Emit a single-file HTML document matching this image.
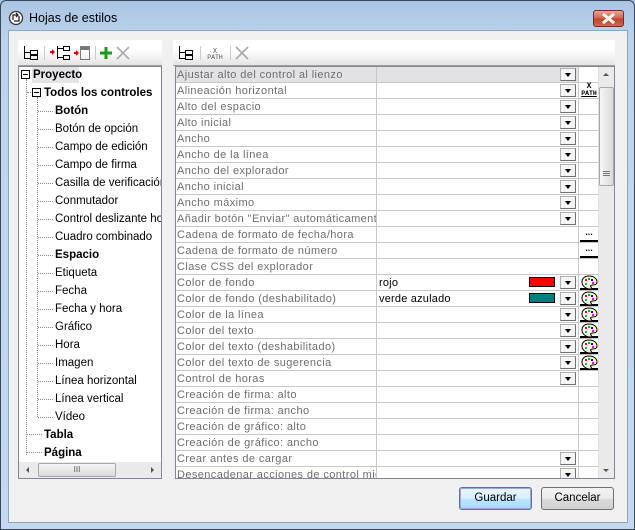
<!DOCTYPE html>
<html><head><meta charset="utf-8"><style>
*{box-sizing:border-box;margin:0;padding:0}
body{width:635px;height:530px;overflow:hidden;font-family:"Liberation Sans","DejaVu Sans",sans-serif;font-size:11px;position:relative;background:#a9c4e2}
.a{position:absolute}
#frame{left:0;top:0;width:635px;height:530px;border:1px solid #3a4a5c;border-radius:6px 6px 0 0;background:linear-gradient(#aac5e4,#bdd4ec 40px,#c4d9ef)}
#client{left:8px;top:30px;width:620px;height:493px;background:#f0f0f0;border:1px solid #8da6c2}
.tb{background:linear-gradient(#fff,#fff 40%,#e4e4e4);height:26px;border-bottom:1px solid #a0a0a0}
#tree{left:18px;top:66px;width:144px;height:413px;border:1px solid #828790;background:#fff;overflow:hidden}
.ti{position:absolute;white-space:nowrap;font-size:11.5px;color:#000;height:16px;line-height:16px}
.b{font-weight:bold}
.box{position:absolute;width:9px;height:9px;border:1px solid #000;background:#fff}
.box:after{content:"";position:absolute;left:1px;top:3px;width:5px;height:1px;background:#000}
.dv{position:absolute;border-left:1px dotted #888;width:0}
.dh{position:absolute;border-top:1px dotted #888;height:0}
#grid{left:175px;top:66px;width:440px;height:413px;border:1px solid #828790;background:#fff;overflow:hidden}
.r{position:absolute;left:0;width:422px;height:16px;border-bottom:1px solid #c8c8c8}
.l{position:absolute;left:0;top:0;width:201px;height:15px;border-right:1px solid #c8c8c8;color:#6d6d6d;font-size:11px;letter-spacing:0.4px;line-height:16px;padding-left:1px;white-space:nowrap;overflow:hidden}
.v{position:absolute;left:201px;top:0;width:202px;height:15px;border-right:1px solid #c8c8c8;font-size:11px;letter-spacing:0.2px;line-height:16px;padding-left:2px;color:#000}
.dd{position:absolute;left:384px;top:1px;width:16px;height:13px;background:#f4f4f4;border:1px solid #b0b0b0;border-right-color:#707070;border-bottom-color:#707070}
.dd:after{content:"";position:absolute;left:4px;top:4px;border-left:3.5px solid transparent;border-right:3.5px solid transparent;border-top:4px solid #000}
.sw{position:absolute;left:354px;top:2px;width:26px;height:10px;border:1px solid #000}
.btn3{position:absolute;left:404px;top:0;width:18px;height:15px;border-bottom:2px solid #000;font-weight:bold;font-size:9px;text-align:center;line-height:10px}
.pal{position:absolute;left:404px;top:0;width:18px;height:15px;border-bottom:2px solid #000}
.button{position:absolute;height:23px;border:1px solid #707070;border-radius:3px;background:linear-gradient(#f2f2f2,#ebebeb 50%,#dddddd 51%,#cfcfcf);text-align:center;line-height:21px;font-size:11.5px}
</style></head><body>
<div id="frame" class="a"></div>
<svg class="a" style="left:8px;top:10px" width="16" height="16" viewBox="0 0 16 16"><circle cx="8" cy="8" r="6.5" fill="#fff" stroke="#333" stroke-width="1.3"/><path d="M5 10V5h5M8 3l2 2-2 2M11 6v5H6" fill="none" stroke="#222" stroke-width="1.3"/></svg>
<div class="a" style="left:29px;top:11px;font-size:12.5px;color:#000">Hojas de estilos</div>
<div class="a" style="left:593px;top:10px;width:31px;height:17px;border:1px solid #7a2a22;border-radius:3px;background:linear-gradient(#e8a496,#d4604c 50%,#c2402a 51%,#d06850)"></div>
<svg class="a" style="left:600px;top:12px" width="17" height="13" viewBox="0 0 17 13"><path d="M3 2l11 9M14 2L3 11" stroke="#fff" stroke-width="3"/><path d="M3 2l11 9M14 2L3 11" stroke="#f4f4f4" stroke-width="2"/></svg>
<div id="client" class="a"></div>

<div class="a tb" style="left:18px;top:40px;width:144px"></div>
<svg class="a" style="left:22px;top:44px" width="140" height="18" viewBox="0 0 140 18">
<g fill="none" stroke="#000"><path d="M2.5 2v12.5h6M2.5 8.5h6"/><rect x="8.5" y="6.5" width="7" height="4"/><rect x="8.5" y="11.5" width="7" height="4"/></g>
<line x1="22.5" y1="2" x2="22.5" y2="16" stroke="#ccc"/>
<g fill="none" stroke="#000"><path d="M35.5 2v13M35.5 4.5h6M35.5 13.5h6"/><rect x="41.5" y="2.5" width="6" height="4"/><rect x="41.5" y="11.5" width="6" height="4"/></g>
<path d="M30 5l3 3-3 3z" fill="#d00"/><rect x="28" y="7" width="3" height="2" fill="#d00"/>
<path d="M54 6l3 3-3 3z" fill="#d00"/><rect x="52" y="8" width="3" height="2" fill="#d00"/>
<g fill="none" stroke="#000" stroke-dasharray="1 1"><rect x="58.5" y="2.5" width="9" height="13"/></g><rect x="59" y="3" width="8" height="3" fill="#777"/>
<line x1="73.5" y1="2" x2="73.5" y2="16" stroke="#ccc"/>
<path d="M84 3v12M78 9h12" stroke="#1a9a1a" stroke-width="3"/>
<path d="M95 3l12 12M107 3L95 15" stroke="#aaa" stroke-width="1.6"/>
</svg>

<div id="tree" class="a">
<div class="dv" style="left:7px;top:12px;height:376px"></div>
<div class="dv" style="left:18px;top:30px;height:320px"></div>
<div class="dh" style="left:8px;top:25px;width:6px"></div>
<div class="dh" style="left:8px;top:367px;width:15px"></div>
<div class="dh" style="left:8px;top:385px;width:15px"></div>
<div id="lines"></div>
<div class="a" style="left:13px;top:0;width:47px;height:16px;background:#e4e4e4"></div>
<div class="box" style="left:2px;top:3px"></div>
<div class="ti b" style="left:14px;top:0">Proyecto</div>
<div class="box" style="left:13px;top:21px"></div>
<div class="ti b" style="left:25px;top:18px">Todos los controles</div>
</div>
<div class="a" style="left:19px;top:462px;width:142px;height:16px;background:#eaeaea"></div>
<div class="a" style="left:38px;top:463px;width:78px;height:14px;border:1px solid #a8a8a8;border-radius:2px;background:linear-gradient(#f6f6f6,#dadada);font-size:8px;text-align:center;line-height:11px;color:#555">III</div>
<div class="a" style="left:26px;top:467px;border-top:3px solid transparent;border-bottom:3px solid transparent;border-right:3px solid #555"></div>
<div class="a" style="left:151px;top:467px;border-top:3px solid transparent;border-bottom:3px solid transparent;border-left:3px solid #555"></div>

<div class="a tb" style="left:173px;top:40px;width:442px"></div>
<svg class="a" style="left:177px;top:44px" width="90" height="18" viewBox="0 0 90 18">
<g fill="none" stroke="#000"><path d="M2.5 2v12.5h6M2.5 8.5h6"/><rect x="8.5" y="6.5" width="7" height="4"/><rect x="8.5" y="11.5" width="7" height="4"/></g>
<line x1="23.5" y1="2" x2="23.5" y2="16" stroke="#ccc"/>
<text x="38" y="9" font-size="7" text-anchor="middle" fill="#555" font-family="Liberation Mono">X</text>
<text x="38" y="15" font-size="6.5" text-anchor="middle" fill="#555" font-family="Liberation Mono">PATH</text>
<line x1="53.5" y1="2" x2="53.5" y2="16" stroke="#ccc"/>
<path d="M59 3l12 12M71 3L59 15" stroke="#aaa" stroke-width="1.6"/>
</svg>

<div id="grid" class="a"><div id="rows"></div>
<div class="a" style="left:422px;top:0;width:17px;height:411px;background:#eaeaea;border-left:1px solid #ddd"></div>
<div class="a" style="left:427px;top:6px;border-left:3px solid transparent;border-right:3px solid transparent;border-bottom:3px solid #555"></div>
<div class="a" style="left:423px;top:20px;width:15px;height:99px;border:1px solid #a8a8a8;border-radius:2px;background:linear-gradient(90deg,#f6f6f6,#dadada)"></div>
<div class="a" style="left:427px;top:104px;width:7px;height:5px;border-top:1px solid #777;border-bottom:1px solid #777"></div>
<div class="a" style="left:427px;top:106px;width:7px;border-top:1px solid #777"></div>
<div class="a" style="left:427px;top:402px;border-left:3px solid transparent;border-right:3px solid transparent;border-top:3px solid #555"></div>
</div>

<div class="button" style="left:459px;top:487px;width:73px;border-color:#3c7fb1;background:linear-gradient(#eaf6fd,#d9f0fc 50%,#bee6fd 51%,#a7d9f5);box-shadow:inset 0 0 0 1px #9ad">Guardar</div>
<div class="button" style="left:541px;top:487px;width:73px">Cancelar</div>

<script>
var items=[["Botón",1],["Botón de opción"],["Campo de edición"],["Campo de firma"],["Casilla de verificación"],["Conmutador"],["Control deslizante horizontal"],["Cuadro combinado"],["Espacio",1],["Etiqueta"],["Fecha"],["Fecha y hora"],["Gráfico"],["Hora"],["Imagen"],["Línea horizontal"],["Línea vertical"],["Vídeo"]];
var h="";items.forEach(function(it,i){var y=36+i*18;h+='<div class="dh" style="left:19px;top:'+(y+8)+'px;width:15px"></div><div class="ti'+(it[1]?' b':'')+'" style="left:36px;top:'+y+'px">'+it[0]+'</div>';});
h+='<div class="ti b" style="left:25px;top:360px">Tabla</div><div class="ti b" style="left:25px;top:378px">Página</div>';
document.getElementById('lines').innerHTML=h;
var pal='<svg width="18" height="15" viewBox="0 0 18 15"><path d="M9 1C4 1 2 4 2 7c0 4 4 7 8 7 2 0 2-1 1-2s0-2 2-2c3 0 4-1 4-3 0-4-4-6-8-6z" fill="#fff4dc" stroke="#000"/><rect x="5" y="4" width="2" height="2" fill="#e00"/><rect x="8" y="3" width="2" height="2" fill="#0a0"/><rect x="11" y="4" width="2" height="2" fill="#00e"/><rect x="12" y="7" width="2" height="2" fill="#e0e"/><rect x="5" y="8" width="2" height="2" fill="#0aa"/></svg>';
var R=[["Ajustar alto del control al lienzo","d",0,0,1],["Alineación horizontal","d","x"],["Alto del espacio","d"],["Alto inicial","d"],["Ancho","d"],["Ancho de la línea","d"],["Ancho del explorador","d"],["Ancho inicial","d"],["Ancho máximo","d"],["Añadir botón \"Enviar\" automáticamente","d"],["Cadena de formato de fecha/hora","","e"],["Cadena de formato de número","","e"],["Clase CSS del explorador",""],["Color de fondo","d","p","rojo|#f00"],["Color de fondo (deshabilitado)","d","p","verde azulado|#008080"],["Color de la línea","d","p"],["Color del texto","d","p"],["Color del texto (deshabilitado)","d","p"],["Color del texto de sugerencia","d","p"],["Control de horas","d"],["Creación de firma: alto",""],["Creación de firma: ancho",""],["Creación de gráfico: alto",""],["Creación de gráfico: ancho",""],["Crear antes de cargar","d"],["Desencadenar acciones de control mientras","d"]];
var g="";R.forEach(function(r,i){var bg=r[4]?'background:#e2e2e2;':'';g+='<div class="r" style="top:'+(i*16)+'px"><div class="l" style="'+bg+'">'+r[0]+'</div><div class="v" style="'+bg+'">';
if(r[3]){var p=r[3].split('|');g+=p[0]+'<div class="sw" style="left:152px;background:'+p[1]+'"></div>';}
g+='</div>';if(r[1])g+='<div class="dd"></div>';
if(r[2]=="x")g+='<div class="btn3" style="border-bottom:0"><div style="font-size:8px;line-height:8px;font-family:Liberation Mono">X</div><div style="font-size:6.5px;line-height:6px;text-decoration:underline;font-family:Liberation Mono">PATH</div></div>';
if(r[2]=="e")g+='<div class="btn3">...</div>';
if(r[2]=="p")g+='<div class="pal">'+pal+'</div>';
g+='</div>';});
document.getElementById('rows').innerHTML=g;
</script>
</body></html>
